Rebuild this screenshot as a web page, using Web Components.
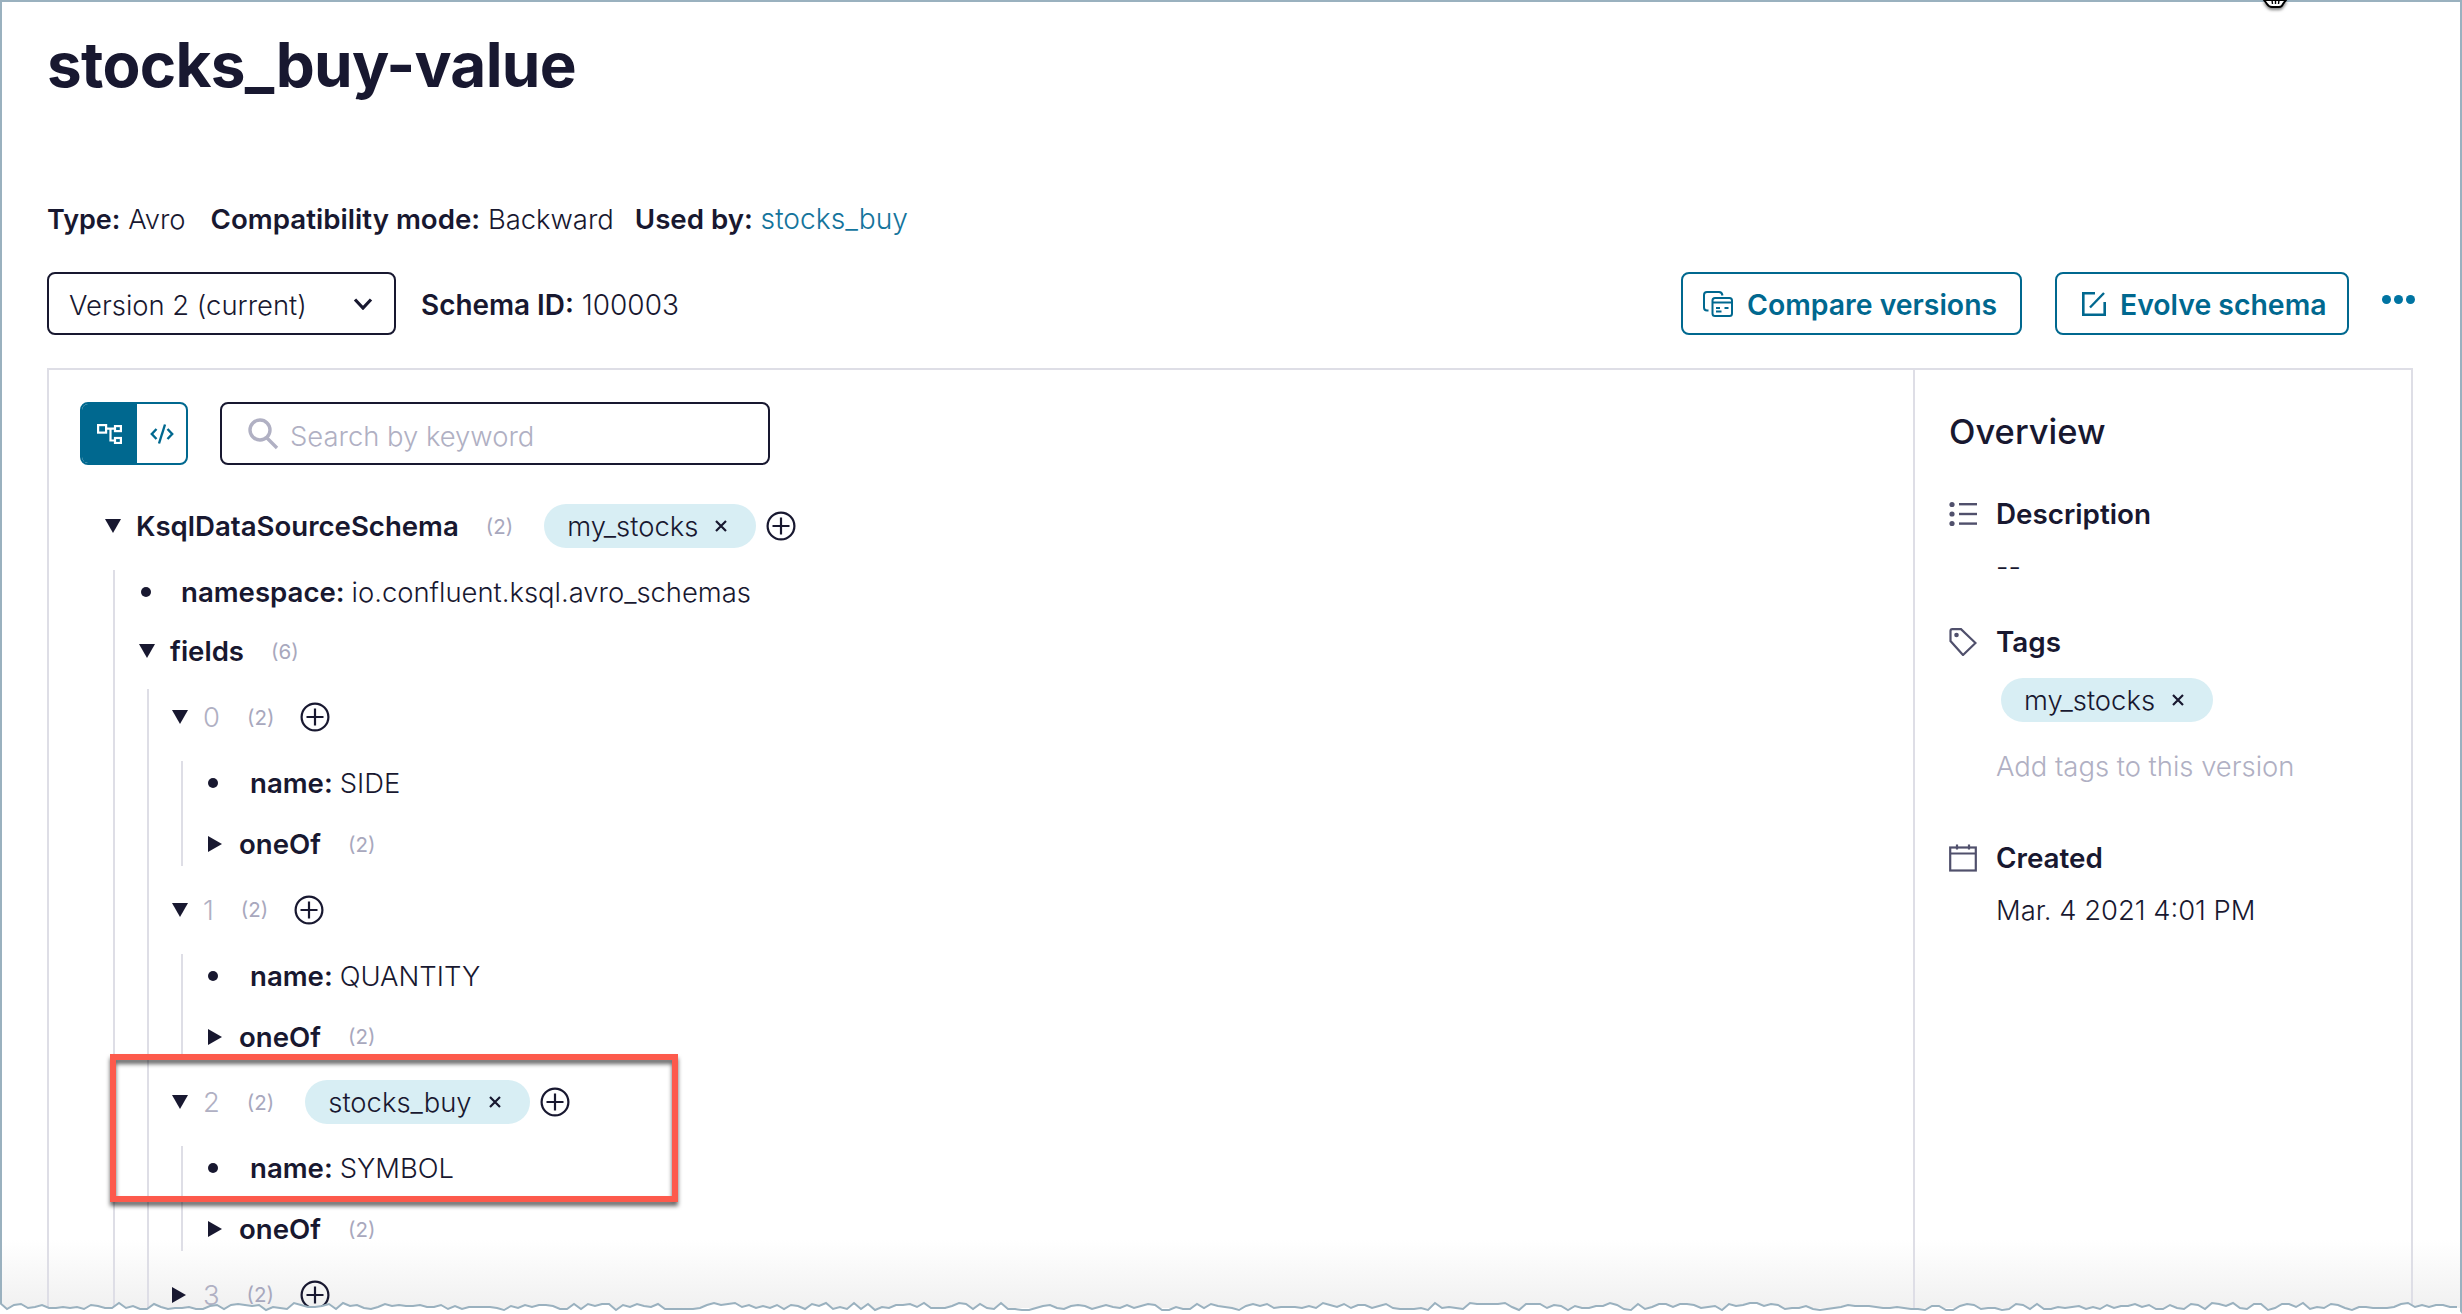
<!DOCTYPE html>
<html>
<head>
<title>stocks_buy-value</title>
<style>
  html, body { margin: 0; background: #fff; overflow: hidden; }
  body { font-family: Inter, "Liberation Sans", sans-serif; color: #181830; }
</style>
</head>
<body>
<schema-page>
  <page-header title="stocks_buy-value"></page-header>
  <schema-panel>
    <schema-tree slot="tree">
      <tree-node label="KsqlDataSourceSchema" count="2" tag="my_stocks" plus open inset="8" pad="24" gap="15">
        <tree-leaf name="namespace" value="io.confluent.ksql.avro_schemas" off="2"></tree-leaf>
        <tree-node label="fields" count="6" open inset="8" pad="23" gap="21.5" lift="16" top="6">
          <tree-node label="0" count="2" plus index open inset="9" pad="25" gap="17">
            <tree-leaf name="name" value="SIDE"></tree-leaf>
            <tree-node label="oneOf" count="2"></tree-node>
          </tree-node>
          <tree-node label="1" count="2" plus index open inset="9" pad="25" gap="17">
            <tree-leaf name="name" value="QUANTITY"></tree-leaf>
            <tree-node label="oneOf" count="2"></tree-node>
          </tree-node>
          <tree-node label="2" count="2" tag="stocks_buy" plus index open inset="9" pad="25" gap="17">
            <tree-leaf name="name" value="SYMBOL"></tree-leaf>
            <tree-node label="oneOf" count="2"></tree-node>
          </tree-node>
          <tree-node label="3" count="2" plus index></tree-node>
        </tree-node>
      </tree-node>
    </schema-tree>
    <overview-panel slot="side"></overview-panel>
  </schema-panel>
</schema-page>

<script>
  const ICONS = {
    compare: '<svg width="30" height="26" viewBox="0 0 30 26" fill="none" stroke="currentColor" stroke-width="2"><path d="M5.5 19.5 H4 Q1 19.5 1 16.5 V4 Q1 1 4 1 H16 Q19 1 19.5 4.5"/><rect x="9.5" y="7" width="19.5" height="18" rx="2.5"/><path d="M9.5 11.5 H29 M13 17 H17 M21.5 17 H25.5 M13 20.5 H18.5"/></svg>',
    evolve: '<svg width="24" height="24" viewBox="0 0 24 24" fill="none" stroke="currentColor" stroke-width="2.6"><path d="M13 1.3 H1.3 V22.7 H22.7 V10"/><path d="M8 15.5 L22 1" stroke-width="2.4"/></svg>',
    tree: '<svg width="25" height="20" viewBox="0 0 25 20" fill="none" stroke="#fff" stroke-width="2.2"><rect x="1.1" y="1.1" width="8" height="7.5"/><rect x="18" y="2.1" width="5.9" height="5"/><rect x="18" y="14" width="5.9" height="5"/><path d="M9 4.6 H18 M13.5 4.6 V16.5 H18"/></svg>',
    code: '<svg width="24" height="20" viewBox="0 0 24 20" fill="none" stroke="currentColor" stroke-width="2.4"><path d="M6.5 5 L1.8 10 L6.5 15 M17.5 5 L22.2 10 L17.5 15"/><path d="M15 .5 L9 19.5"/></svg>',
    search: '<svg width="32" height="32" viewBox="0 0 32 32" fill="none" stroke="#b0b0c3" stroke-width="3.4"><circle cx="13" cy="12" r="10"/><path d="M20 20 L30 30"/></svg>',
    plus: '<svg width="30" height="30" viewBox="0 0 30 30" fill="none" stroke="#181830" stroke-width="2.2"><circle cx="15" cy="15" r="13.4"/><path d="M15 6.5 V23.5 M6.5 15 H23.5"/></svg>',
    list: '<svg width="28" height="26" viewBox="0 0 28 26" fill="#50506c"><circle cx="3" cy="3.5" r="2.6"/><circle cx="3" cy="13" r="2.6"/><circle cx="3" cy="22.5" r="2.6"/><rect x="10" y="2" width="18" height="2.4"/><rect x="10" y="11.8" width="18" height="2.4"/><rect x="10" y="21.4" width="18" height="2.4"/></svg>',
    tag: '<svg width="28" height="28" viewBox="0 0 28 28" fill="none" stroke="#50506c" stroke-width="2.2"><path d="M1.5 3 Q1.5 1.2 3.3 1.2 H12 L26.5 15 L14 27 L1.5 13 Z"/><circle cx="7.5" cy="7" r="1.2" fill="#50506c"/></svg>',
    calendar: '<svg width="28" height="28" viewBox="0 0 28 28" fill="none" stroke="#50506c" stroke-width="2.2"><rect x="1.2" y="3.5" width="25.6" height="23"/><path d="M1.2 9.5 H26.8 M8 0.5 V5.5 M20 0.5 V5.5"/></svg>'
  };

  class SchemaPage extends HTMLElement {
    constructor() {
      super();
      this.attachShadow({ mode: 'open' });
      // torn edge along the bottom of the screenshot
      let seed = 7, pts = [];
      const rnd = () => (seed = (seed * 16807) % 2147483647) / 2147483647;
      for (let x = 0; x <= 2462; x += 7) pts.push(x + ',' + (1303 + Math.round(rnd() * 7)));
      const line = pts.join(' ');
      this.shadowRoot.innerHTML = `
      <style>
        :host { display: block; position: relative; isolation: isolate; width: 2462px; height: 1314px; overflow: hidden; background: #fff;
          box-sizing: border-box; padding: 2px 47px 0; box-shadow: inset 0 2px #9ab1bf, inset 2px 0 #9ab1bf, inset -2px 0 #9ab1bf; }
        .fade { position: absolute; z-index: -1; left: 2px; right: 2px; top: 1240px; height: 68px;
          background: linear-gradient(rgba(238,238,238,0), rgba(238,238,238,.85)); }
        .torn { position: absolute; left: 0; top: 0; }
        .callout { position: absolute; left: 110px; top: 1054px; width: 568px; height: 148px; box-sizing: border-box;
          border: 6px solid #fd5a4c; filter: drop-shadow(0 4px 2px rgba(0,0,0,.6)); }
        .cursor { position: absolute; left: 2262px; top: 0; filter: drop-shadow(0 2px 1.5px rgba(0,0,0,.5)); }
      </style>
      <slot></slot>
      <div class="fade"></div>
      <svg class="torn" width="2462" height="1314">
        <polygon points="0,1314 ${line} 2462,1314" fill="#fff"/>
        <polyline points="${line}" fill="none" stroke="#9ab1bf" stroke-width="2"/>
      </svg>
      <div class="callout"></div>
      <svg class="cursor" width="26" height="12" viewBox="0 0 26 12">
        <path d="M2 0 L5 4 Q7 7 10 7 H17 Q20 7 21 4 L24 0 Z" fill="#fff" stroke="#000" stroke-width="2"/>
        <path d="M10 0 L10.5 4 M13.5 0 V4 M17 0 L16.5 4" stroke="#000" stroke-width="1.4"/>
      </svg>`;
    }
  }

  class PageHeader extends HTMLElement {
    connectedCallback() {
      const root = this.attachShadow({ mode: 'open' });
      root.innerHTML = `
      <style>
        :host { display: block; font-family: Inter, "Liberation Sans", sans-serif; color: #181830; font-size: 27.4px; font-weight: 300; }
        h1 { margin: 0; padding-top: 23px; font-size: 62px; line-height: 80px; font-weight: 700; letter-spacing: -.7px; }
        b { font-weight: 600; font-size: 27.9px; }
        .meta b { font-size: 27.7px; }
        .meta b.type { font-size: 27px; }
        .meta { display: flex; gap: 25px; margin-top: 94px; height: 40px; line-height: 40px; }
        .meta .used { margin-left: -4px; }
        .meta a { color: #14749c; text-decoration: none; font-size: 28.2px; }
        .bar { display: flex; align-items: center; margin-top: 33px; height: 63px; }
        .bar span { position: relative; top: 1px; }
        .select { box-sizing: border-box; width: 349px; height: 63px; border: 2px solid #181830; border-radius: 8px;
          display: flex; align-items: center; justify-content: space-between; padding: 0 21px 0 20px; }
        .id { margin-left: 25px; font-size: 28px; }
        .btn { box-sizing: border-box; height: 63px; border: 2px solid #00688f; border-radius: 8px; color: #00688f;
          display: flex; align-items: center; font-weight: 600; font-size: 28.4px; margin-left: 33px; }
        .compare { margin-left: auto; width: 341px; padding-left: 20px; gap: 14px; }
        .evolve { width: 294px; padding-left: 25px; gap: 14px; }
        .dots { display: flex; gap: 3px; margin: -8px 0 0 33px; }
        .dots i { width: 9px; height: 9px; border-radius: 50%; background: #0074a2; }
      </style>
      <h1>${this.getAttribute('title')}</h1>
      <div class="meta">
        <span><b class="type">Type:</b> Avro</span>
        <span><b>Compatibility mode:</b> Backward</span>
        <span class="used"><b>Used by:</b> <a href="#">stocks_buy</a></span>
      </div>
      <div class="bar">
        <div class="select"><span>Version 2 (current)</span>
          <svg width="20" height="12" viewBox="0 0 20 12" fill="none" stroke="#181830" stroke-width="3.2"><path d="M2 1.5 L10 10 L18 1.5"/></svg>
        </div>
        <span class="id"><b>Schema ID:</b> 100003</span>
        <div class="btn compare">${ICONS.compare}<span>Compare versions</span></div>
        <div class="btn evolve">${ICONS.evolve}<span>Evolve schema</span></div>
        <div class="dots"><i></i><i></i><i></i></div>
      </div>`;
    }
  }

  class SchemaPanel extends HTMLElement {
    constructor() {
      super();
      this.attachShadow({ mode: 'open' }).innerHTML = `
      <style>
        :host { display: grid; grid-template-columns: 1fr 498px; margin-top: 33px; height: 1100px; box-sizing: border-box;
          width: 2366px; border: 2px solid #dedee6; border-bottom: 0; }
        .main { padding: 32px 31px 0; }
        .side { border-left: 2px solid #dedee6; }
      </style>
      <div class="main"><slot name="tree"></slot></div>
      <div class="side"><slot name="side"></slot></div>`;
    }
  }

  class SchemaTree extends HTMLElement {
    constructor() {
      super();
      this.attachShadow({ mode: 'open' }).innerHTML = `
      <style>
        :host { display: block; font-family: Inter, "Liberation Sans", sans-serif; }
        .tools { display: flex; gap: 32px; }
        .toggle { box-sizing: border-box; display: flex; width: 108px; height: 63px; border: 2px solid #00688f; border-radius: 8px; overflow: hidden; color: #00688f; }
        .toggle span { display: flex; align-items: center; justify-content: center; }
        .toggle .on { width: 55px; background: #00688f; }
        .toggle .off { flex: 1; }
        .search { box-sizing: border-box; display: flex; align-items: center; gap: 11px; width: 550px; height: 63px; border: 2px solid #181830;
          border-radius: 8px; padding: 0 0 0 25px; color: #b0b0c3; font-size: 27.4px; font-weight: 300; }
        .search span { position: relative; top: 2px; }
        .nodes { margin: 39px 0 0 25px; }
      </style>
      <div class="tools">
        <div class="toggle"><span class="on">${ICONS.tree}</span><span class="off">${ICONS.code}</span></div>
        <div class="search">${ICONS.search}<span>Search by keyword</span></div>
      </div>
      <div class="nodes"><slot></slot></div>`;
    }
  }

  class TagChip extends HTMLElement {
    constructor() {
      super();
      this.attachShadow({ mode: 'open' }).innerHTML = `
      <style>
        :host { display: inline-flex; align-items: center; box-sizing: border-box; height: 44px; padding: 0 28px 0 23px; gap: 16px;
          border-radius: 22px; background: #d8eef4; color: #181830; font-size: 27.4px; font-weight: 300; line-height: 44px; }
        svg { flex: none; }
      </style>
      <slot></slot>
      <svg width="14" height="14" viewBox="0 0 14 14" stroke="#181830" stroke-width="2.2"><path d="M2 2 L12 12 M12 2 L2 12"/></svg>`;
    }
  }

  class TreeNode extends HTMLElement {
    connectedCallback() {
      const a = n => this.getAttribute(n);
      const has = n => this.hasAttribute(n);
      const open = has('open');
      this.attachShadow({ mode: 'open' }).innerHTML = `
      <style>
        :host { display: block; font-family: Inter, "Liberation Sans", sans-serif; color: #181830; font-size: 27.4px; }
        .row { display: flex; align-items: center; height: 44px; }
        .arrow { width: 16px; margin-right: 15px; display: flex; flex: none; }
        .label { font-weight: 600; font-size: 27.6px; }
        .index { font-weight: 300; color: #b0b0c3; }
        .count { margin-left: 27px; font-size: 20.5px; font-weight: 400; color: #a8a8bd; }
        .tag { margin-left: 31px; }
        .plus { display: flex; margin-left: ${a('tag') ? 10 : 26}px; }
        .kids { margin: ${a('lift') || 22}px 0 0 ${a('inset') || 0}px; padding: ${a('top') || 0}px 0 0 ${a('pad') || 0}px; border-left: 2px solid #dedee6;
          display: flex; flex-direction: column; gap: ${a('gap') || 0}px; }
      </style>
      <div class="row">
        <span class="arrow">${open
          ? '<svg width="16" height="14" viewBox="0 0 16 14"><path d="M0 0 H16 L8 14 Z" fill="#181830"/></svg>'
          : '<svg width="14" height="16" viewBox="0 0 14 16"><path d="M0 0 L14 8 L0 16 Z" fill="#181830"/></svg>'}</span>
        <span class="${has('index') ? 'index' : 'label'}">${a('label')}</span>
        <span class="count">(${a('count')})</span>
        ${a('tag') ? `<tag-chip class="tag">${a('tag')}</tag-chip>` : ''}
        ${has('plus') ? `<span class="plus">${ICONS.plus}</span>` : ''}
      </div>
      ${open ? '<div class="kids"><slot></slot></div>' : ''}`;
    }
  }

  class TreeLeaf extends HTMLElement {
    connectedCallback() {
      const off = Number(this.getAttribute('off') || 0);
      this.attachShadow({ mode: 'open' }).innerHTML = `
      <style>
        :host { display: flex; align-items: center; height: 44px; font-family: Inter, "Liberation Sans", sans-serif; color: #181830; font-size: 27.4px; font-weight: 300; }
        i { flex: none; width: 10px; height: 10px; border-radius: 50%; background: #181830; margin: 0 ${32 - off}px 0 ${off}px; }
        b { font-weight: 600; font-size: 27.6px; margin-right: 7px; }
      </style>
      <i></i><b>${this.getAttribute('name')}:</b><span>${this.getAttribute('value')}</span>`;
    }
  }

  class OverviewPanel extends HTMLElement {
    constructor() {
      super();
      this.attachShadow({ mode: 'open' }).innerHTML = `
      <style>
        :host { display: block; padding: 40px 0 0 34px; font-family: Inter, "Liberation Sans", sans-serif; color: #181830; font-size: 27.4px; font-weight: 300; }
        h2 { margin: 0; font-size: 34.5px; line-height: 44px; font-weight: 500; }
        .item { display: grid; grid-template-columns: 47px 1fr; align-items: center; line-height: 40px; }
        .item b { font-weight: 600; font-size: 27.8px; }
        .item svg { display: block; }
        .val { grid-column: 2; }
        .a { margin-top: 40px; }
        .dash { margin-top: 13px; }
        .b { margin-top: 35px; }
        .chip { grid-column: 2; margin: 16px 0 0 5px; }
        .add { grid-column: 2; margin-top: 24px; color: #b0b0c3; }
        .c { margin-top: 52px; }
        .date { margin-top: 12px; }
      </style>
      <h2>Overview</h2>
      <div class="item a">${ICONS.list}<b>Description</b><span class="val dash">--</span></div>
      <div class="item b">${ICONS.tag}<b>Tags</b><div class="chip"><tag-chip>my_stocks</tag-chip></div><span class="add">Add tags to this version</span></div>
      <div class="item c">${ICONS.calendar}<b>Created</b><span class="val date">Mar. 4 2021 4:01 PM</span></div>`;
    }
  }

  customElements.define('schema-page', SchemaPage);
  customElements.define('page-header', PageHeader);
  customElements.define('schema-panel', SchemaPanel);
  customElements.define('schema-tree', SchemaTree);
  customElements.define('tag-chip', TagChip);
  customElements.define('tree-node', TreeNode);
  customElements.define('tree-leaf', TreeLeaf);
  customElements.define('overview-panel', OverviewPanel);
</script>
</body>
</html>
